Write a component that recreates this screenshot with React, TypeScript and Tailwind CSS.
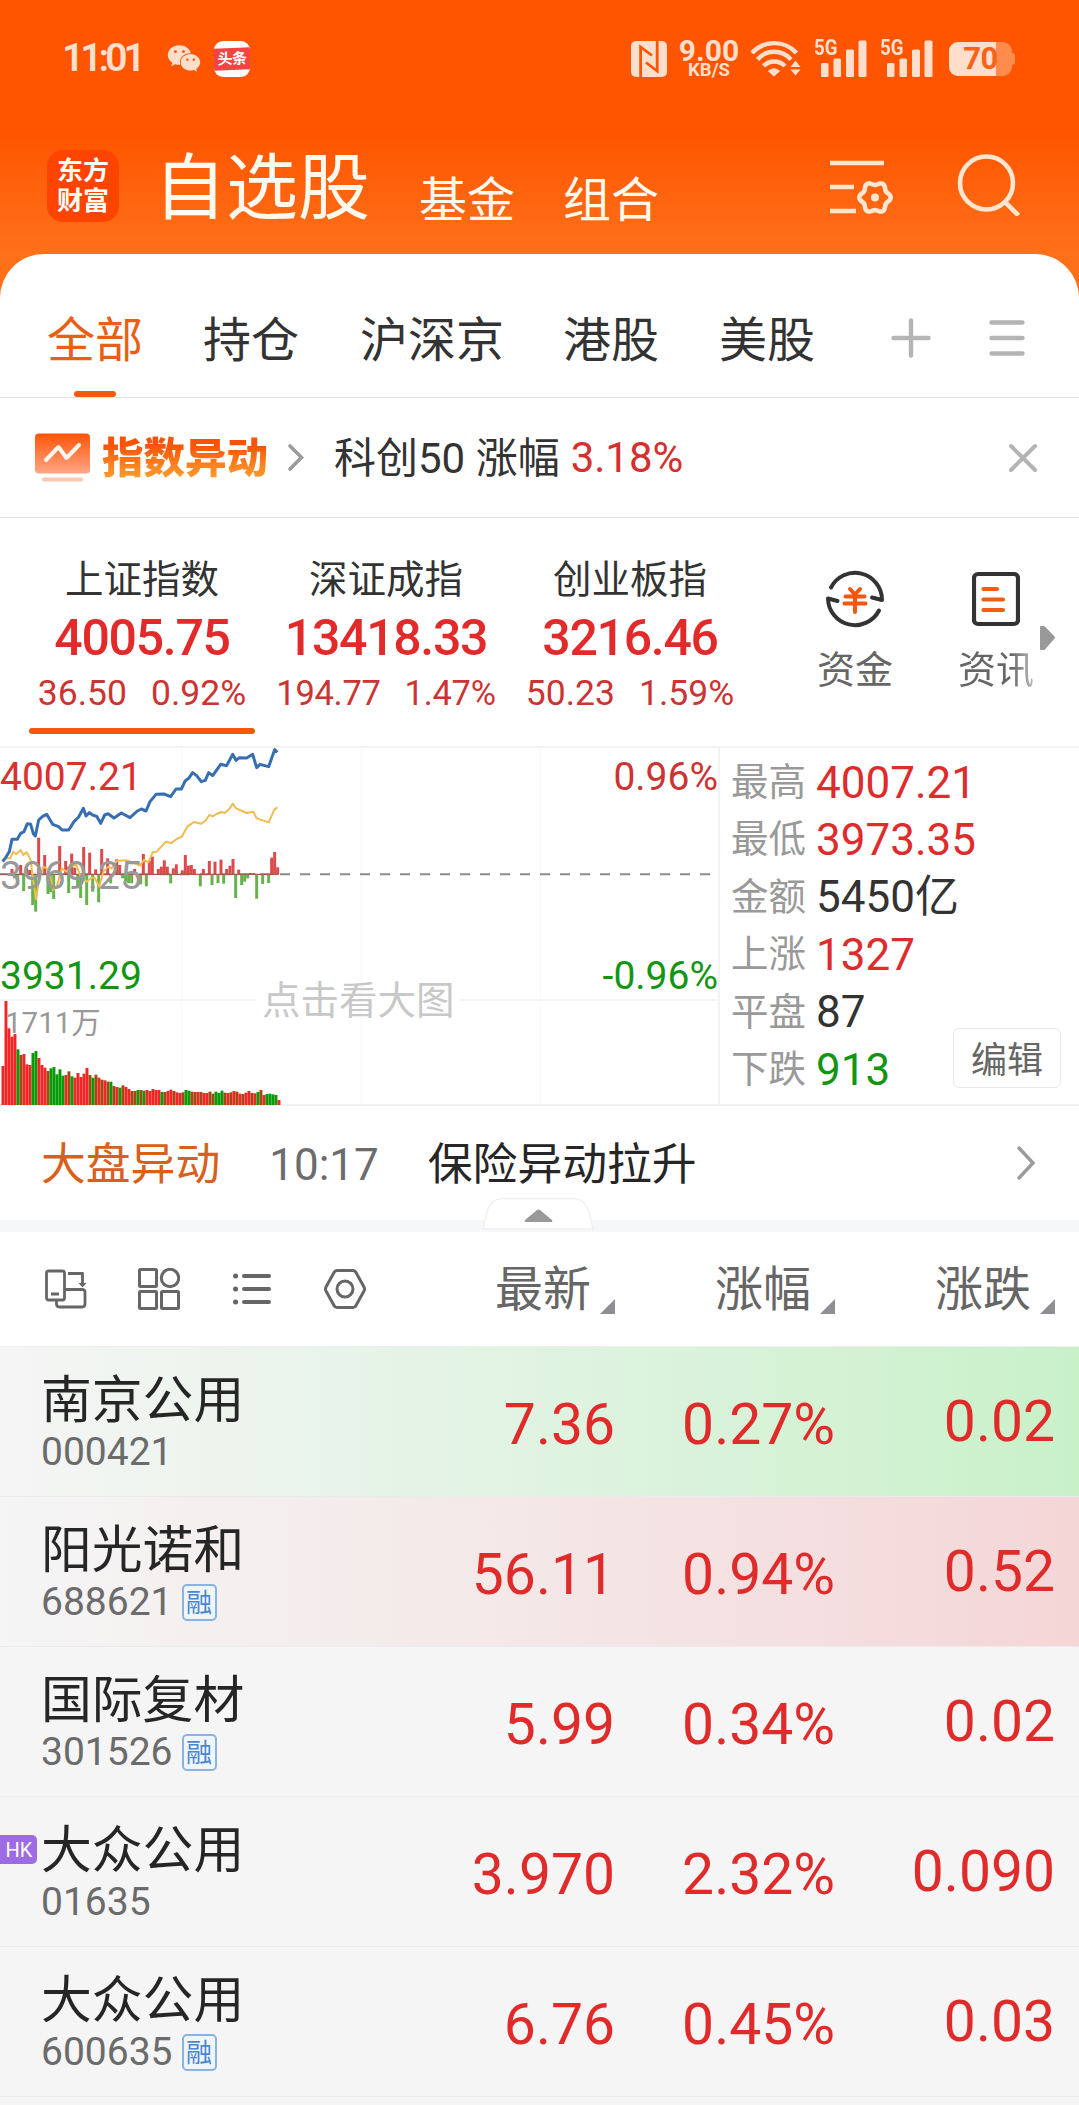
import React from 'react';
import { FaWeixin } from 'react-icons/fa';

// ─── Data ─────────────────────────────────────────────────────────────────────

interface MarketIndex {
    name: string;
    price: string;
    change: string;
    percent: string;
    active?: boolean;
}

const INDICES: MarketIndex[] = [
    { name: '上证指数', price: '4005.75', change: '36.50', percent: '0.92%', active: true },
    { name: '深证成指', price: '13418.33', change: '194.77', percent: '1.47%' },
    { name: '创业板指', price: '3216.46', change: '50.23', percent: '1.59%' },
];

const STATS = [
    { label: '最高', value: '4007.21', color: 'text-[#de2b2b]' },
    { label: '最低', value: '3973.35', color: 'text-[#de2b2b]' },
    { label: '金额', value: '5450亿', color: 'text-[#333333]' },
    { label: '上涨', value: '1327', color: 'text-[#de2b2b]' },
    { label: '平盘', value: '87', color: 'text-[#333333]' },
    { label: '下跌', value: '913', color: 'text-[#129612]' },
];

interface Stock {
    name: string;
    code: string;
    last: string;
    percent: string;
    change: string;
    margin?: boolean;
    hk?: boolean;
    bg: string;
}

const STOCKS: Stock[] = [
    { name: '南京公用', code: '000421', last: '7.36', percent: '0.27%', change: '0.02', bg: 'bg-linear-to-r from-[#f5f5f5] via-[#e0f3e2] to-[#c9f1c8]' },
    { name: '阳光诺和', code: '688621', last: '56.11', percent: '0.94%', change: '0.52', margin: true, bg: 'bg-linear-to-r from-[#f5f5f5] via-[#f4e7e7] to-[#f5d6d7]' },
    { name: '国际复材', code: '301526', last: '5.99', percent: '0.34%', change: '0.02', margin: true, bg: 'bg-[#f5f5f5]' },
    { name: '大众公用', code: '01635', last: '3.970', percent: '2.32%', change: '0.090', hk: true, bg: 'bg-[#f5f5f5]' },
    { name: '大众公用', code: '600635', last: '6.76', percent: '0.45%', change: '0.03', margin: true, bg: 'bg-[#f5f5f5]' },
];

// Chart data is in chart units, three per pixel
const PRICE_LINE =
    '8,380 18,366 28,350 36,313 52,313 62,295 72,290 82,266 92,268 100,296 106,303 116,255 128,244 140,238 158,268 176,275 186,285 206,285 222,260 236,246 250,220 258,243 268,233 278,240 290,244 302,265 314,240 324,236 342,249 364,234 390,248 412,228 424,222 438,228 450,200 468,178 492,177 512,185 528,162 544,162 556,137 566,130 578,113 590,122 604,140 616,136 626,113 638,122 662,88 680,92 698,58 708,76 718,68 740,69 758,58 770,98 780,88 806,95 824,44 832,52';

const AVERAGE_LINE =
    '18,370 30,370 40,350 48,358 62,345 70,360 80,352 92,375 100,440 108,492 118,430 130,395 140,400 150,420 160,465 170,455 185,400 200,410 215,395 228,388 240,420 260,440 275,428 285,430 297,455 310,410 325,395 335,400 350,378 380,376 405,385 420,392 432,375 445,382 458,352 470,350 498,320 514,324 530,312 545,305 562,275 582,261 604,266 618,255 628,240 638,244 650,237 664,231 674,234 688,222 698,206 708,220 740,234 760,230 770,250 806,262 822,226 832,217';

const UP_BARS = [
    [36, 402], [62, 390], [80, 400], [89, 405], [116, 308], [134, 360], [179, 333], [197, 378], [206, 395], [215, 356], [224, 398],
    [251, 336], [269, 353], [287, 403], [305, 342], [323, 370], [350, 373], [359, 390], [404, 402], [430, 357], [448, 378], [457, 365],
    [475, 402], [484, 395], [493, 376], [502, 395], [520, 400], [529, 388], [547, 406], [556, 360], [565, 392], [574, 390], [583, 402],
    [610, 402], [628, 378], [645, 380], [663, 374], [680, 402], [690, 392], [699, 372], [716, 404], [752, 414], [761, 414], [815, 368],
    [824, 351], [833, 397],
];

const DOWN_BARS = [
    [44, 430], [53, 450], [71, 468], [98, 510], [107, 530], [144, 477], [152, 472], [161, 492], [206, 474], [233, 460], [242, 489],
    [260, 510], [278, 470], [296, 502], [332, 445], [368, 430], [377, 440], [386, 444], [395, 445], [422, 448], [439, 454], [512, 445],
    [601, 454], [636, 450], [654, 444], [671, 446], [707, 489], [725, 450], [734, 440], [743, 430], [770, 491], [788, 447], [806, 444],
];

const VOLUME_TOPS = [
    993, 798, 880, 905, 897, 943, 960, 957, 988, 990, 954, 948, 969, 990, 998, 1008, 1000, 996, 1018, 1003, 1022, 1020, 1009, 1024,
    1028, 1014, 1026, 1016, 999, 1020, 1028, 1019, 1028, 1034, 1036, 1040, 1040, 1053, 1056, 1058, 1051, 1056, 1062, 1068, 1068, 1065,
    1065, 1067, 1065, 1068, 1062, 1065, 1065, 1071, 1071, 1068, 1064, 1068, 1072, 1074, 1072, 1065, 1067, 1070, 1071, 1071, 1071, 1074,
    1074, 1070, 1076, 1070, 1074, 1067, 1073, 1074, 1072, 1068, 1070, 1076, 1077, 1073, 1068, 1074, 1075, 1071, 1065, 1080, 1077, 1076,
    1078, 1080, 1095,
];

// r = up, g = down, m = mixed
const VOLUME_COLORS = 'rrrrrgmrrrggrrrmgggggrmgrrrrrmgmrmrmgmrgmrrmmgmgrrrrrgmrrmrrmggmmrmrrmmgggmrmrmrmrrmrgmrggggrrg';

const barColor = (c: string) => (c === 'g' ? '#069a06' : c === 'm' ? '#a04a12' : '#f02626');

const GEAR_POINTS = Array.from({ length: 72 }, (_, i) => {
    const a = (i * Math.PI) / 36;
    const r = 14.1 + 1.6 * Math.cos(6 * a);
    return `${(45 + r * Math.cos(a)).toFixed(2)},${(37.5 + r * Math.sin(a)).toFixed(2)}`;
}).join(' ');

// ─── Status bar ───────────────────────────────────────────────────────────────

const Signal: React.FC = () => (
    <div className="relative h-[37px] w-[52px]">
        <span className="absolute -left-px top-0 origin-left scale-x-[0.85] text-[22px] font-bold leading-[16px]">5G</span>
        <svg viewBox="0 0 52 37" className="h-full w-full" fill="currentColor">
            <rect x="6" y="23" width="7.5" height="14" rx="1.5" />
            <rect x="18.5" y="18.5" width="7.5" height="18.5" rx="1.5" />
            <rect x="31" y="9.5" width="8" height="27.5" rx="1.5" />
            <rect x="43.5" y="0.5" width="8" height="36.5" rx="1.5" />
        </svg>
    </div>
);

const StatusBar: React.FC = () => (
    <div className="flex h-[117px] items-center pl-[62px] pr-[64px] text-[#ffdfcc]">
        <span className="w-[105px] text-[39px] font-semibold leading-none tracking-[-4px]">11:01</span>
        <FaWeixin className="h-[31px] w-[34px]" />
        <div className="ml-[13px] flex h-[36px] w-[36px] flex-col justify-center overflow-hidden rounded-[9px] bg-white">
            <span className="-skew-y-2 bg-[#f54343] text-center text-[15px] font-bold leading-[22px] tracking-[-0.5px] text-white">头条</span>
        </div>

        <div className="ml-auto flex items-center">
            <svg viewBox="0 0 36 36" className="h-[36px] w-[36px]" fill="none">
                <rect width="36" height="36" rx="5" fill="currentColor" />
                <path d="M9.6 36V6L21 14.5M26.2 0V30L15 21.5" stroke="#ff5500" strokeWidth="2.8" />
            </svg>
            <div className="ml-[11px] flex w-[62px] flex-col items-center">
                <span className="text-[30px] font-bold leading-[21px]">9.00</span>
                <span className="mt-px text-[18.500px] font-bold leading-[16px]">KB/S</span>
            </div>
            <svg viewBox="0 0 51 37" className="ml-[10px] h-[37px] w-[51px]" fill="none" stroke="currentColor" strokeWidth="4.4">
                <path d="M2 13A30 30 0 0 1 46.500 13" />
                <path d="M7.500 19.500A22 22 0 0 1 41 19.500" />
                <path d="M13.500 26A15 15 0 0 1 35 26" />
                <path d="M24 36.500L17.800 31Q24 25.500 30.200 31Z" fill="currentColor" stroke="none" />
                <path d="M45.500 20.500L50.500 27H40.500ZM45.500 35.500L50.500 29.500H40.500Z" fill="currentColor" stroke="none" />
            </svg>
            <div className="ml-[14px]"><Signal /></div>
            <div className="ml-[14px]"><Signal /></div>
            <div className="ml-[16px] flex items-center">
                <div className="relative flex h-[34px] w-[63px] items-center justify-center overflow-hidden rounded-[9px] bg-[#ff8c4d]">
                    <div className="absolute left-0 top-0 h-full w-[47px] bg-[#ffdfcc]" />
                    <span className="relative text-[31px] font-bold leading-none tracking-[-0.5px] text-[#f9621a]">70</span>
                </div>
                <div className="h-[12px] w-[3px] rounded-r-sm bg-[#ff8c4d]" />
            </div>
        </div>
    </div>
);

// ─── Header ───────────────────────────────────────────────────────────────────

const Header: React.FC = () => (
    <div className="flex h-[137px] items-start pl-[47px] pr-[58px] pt-[33px] text-[#fffaf0]">
        <div className="flex h-[72px] w-[72px] flex-col items-center justify-center rounded-[16px] bg-[#ff4400] text-[26px] font-bold leading-[30px] text-white">
            <span>东方</span>
            <span>财富</span>
        </div>
        <span className="ml-[35px] text-[72px] leading-[77px]">自选股</span>
        <span className="ml-[49px] mt-[25px] text-[48px] leading-[52px]">基金</span>
        <span className="ml-[48px] mt-[25px] text-[48px] leading-[52px]">组合</span>
        <svg viewBox="0 0 64 56" className="ml-auto mt-[10px] h-[56px] w-[64px]" fill="none" stroke="#ffe6d0" strokeWidth="4.6">
            <path d="M0 3H54M0 27H24M0 51H26" />
            <polygon points={GEAR_POINTS} strokeLinejoin="round" />
            <circle cx="45" cy="37.500" r="4" fill="#ffe6d0" stroke="none" />
        </svg>
        <svg viewBox="0 0 64 64" className="ml-[63px] mt-[2px] h-[64px] w-[64px]" fill="none" stroke="#ffe6d0" strokeWidth="4.6">
            <circle cx="29.500" cy="31" r="26.500" />
            <path d="M48 50L61.500 63.500" />
        </svg>
    </div>
);

const Tabs: React.FC = () => (
    <div className="relative flex h-[144px] items-center border-b border-[#e2e2e2] pl-[47px] pr-[54px] pt-[31px] text-[48px] leading-none text-[#333333]">
        <span className="mr-[60px] text-[#ea5e16]">全部</span>
        <span className="mr-[61px]">持仓</span>
        <span className="mr-[59px]">沪深京</span>
        <span className="mr-[60px]">港股</span>
        <span>美股</span>
        <svg viewBox="0 0 40 40" className="mb-[6px] ml-auto h-[40px] w-[40px]" stroke="#b4b4b4" strokeWidth="4.400" strokeLinecap="round">
            <path d="M2.500 20H37.500M20 2.500V37.500" />
        </svg>
        <svg viewBox="0 0 36 40" className="mb-[6px] ml-[58px] h-[40px] w-[36px]" stroke="#b4b4b4" strokeWidth="4.400" strokeLinecap="round">
            <path d="M2.500 4.500H33.500M2.500 20H33.500M2.500 35.500H33.500" />
        </svg>
        <div className="absolute bottom-0 left-[74px] h-[6px] w-[42px] rounded-full bg-[#f3590f]" />
    </div>
);

const IndexAlert: React.FC = () => (
    <div className="flex h-[120px] items-center border-b border-[#e2e2e2] pl-[35px] pr-[41px] text-[42px] leading-none text-[#333333]">
        <svg viewBox="0 0 55 50" className="h-[50px] w-[55px]" fill="none">
            <defs>
                <linearGradient id="alert" x1="0" y1="0" x2="0" y2="1">
                    <stop stopColor="#ff5407" />
                    <stop offset="1" stopColor="#ffa684" />
                </linearGradient>
            </defs>
            <rect y="0.500" width="55" height="40" rx="4" fill="url(#alert)" />
            <path d="M11 27L23.500 14L31.500 25L44 12" stroke="#fff7f0" strokeWidth="4" strokeLinecap="round" strokeLinejoin="round" />
            <rect x="7" y="44.500" width="41" height="4" rx="2" fill="#fbc7b0" />
        </svg>
        <span className="ml-[12px] mt-[2px] bg-linear-to-b from-[#fa5306] from-25% to-[#fba02e] to-90% bg-clip-text text-[41.500px] font-black leading-[52px] text-transparent">指数异动</span>
        <svg viewBox="0 0 18 30" className="ml-[19px] h-[30px] w-[18px]" fill="none" stroke="#9b9b9b" strokeWidth="3.600" strokeLinecap="round">
            <path d="M3 3L14.500 14.500L3 26" />
        </svg>
        <span className="ml-[29px] mt-[2px]">科创50 涨幅</span>
        <span className="ml-[11px] mt-px text-[#d4302f]">3.18%</span>
        <svg viewBox="0 0 30 30" className="ml-auto h-[30px] w-[30px]" stroke="#b4b4b4" strokeWidth="4" strokeLinecap="round">
            <path d="M3 3L27 27M27 3L3 27" />
        </svg>
    </div>
);

// ─── Indices ──────────────────────────────────────────────────────────────────

const Indices: React.FC = () => (
    <div className="flex h-[230px] border-b-2 border-[#f3f3f3] pl-[20px]">
        {INDICES.map((item) => (
            <div key={item.name} className="relative flex w-[244px] shrink-0 flex-col items-center pt-[41px] leading-none">
                <span className="text-[38.500px] leading-[42px] text-[#333333]">{item.name}</span>
                <span className="mt-[12px] text-[50px] font-medium leading-[50px] tracking-[-1.300px] text-[#e32a2a]">{item.price}</span>
                <div className={`mt-[11px] flex gap-[24px] whitespace-nowrap leading-[38px] text-[#cc3333] ${item.change.length > 5 ? 'text-[34.500px] tracking-[-0.3px]' : 'text-[35.500px]'}`}>
                    <span>{item.change}</span>
                    <span>{item.percent}</span>
                </div>
                {item.active && <div className="absolute bottom-[12px] left-[9px] h-[6px] w-[226px] rounded-full bg-[#f8560c]" />}
            </div>
        ))}
        <div className="ml-[45px] flex w-[116px] shrink-0 flex-col items-center pt-[51px]">
            <svg viewBox="0 0 60 60" className="h-[60px] w-[60px]" fill="none" stroke="#333333" strokeWidth="4" strokeLinecap="round" strokeLinejoin="round">
                <path d="M6 18.500A27 27 0 0 1 57 31L47 28.500" />
                <path d="M54 41.500A27 27 0 0 1 3 29.500L12.500 32" />
                <path d="M25 20L30 25.500L35 20M20.500 27.500H39.500M19.500 34.500H40.500M30 26V43" stroke="#f8560c" />
            </svg>
            <span className="mt-[20px] text-[38px] leading-[42px] text-[#666666]">资金</span>
        </div>
        <div className="ml-[25px] flex w-[116px] shrink-0 flex-col items-center pt-[51px]">
            <svg viewBox="0 0 48 60" className="h-[60px] w-[48px]" fill="none" stroke="#333333" strokeWidth="4.200" strokeLinecap="round">
                <rect x="2" y="5" width="44" height="50" rx="4" />
                <path d="M11.500 20H25M11.500 30.500H31M11.500 41H31" stroke="#ee5f14" />
            </svg>
            <span className="mt-[20px] bg-linear-to-r from-[#666666] from-70% to-[#c0c0c0] bg-clip-text text-[38px] leading-[42px] text-transparent">资讯</span>
        </div>
        <svg viewBox="0 0 16 26" className="-ml-[14px] mt-[107px] h-[26px] w-[16px]" fill="#999999" stroke="#999999" strokeWidth="2" strokeLinejoin="round">
            <path d="M1 2L4 2L14 12.500L4 24H1Z" />
        </svg>
    </div>
);

// ─── Intraday chart ───────────────────────────────────────────────────────────

const Chart: React.FC = () => (
    <div className="relative h-[357px] w-[718px] overflow-hidden leading-none">
        <svg viewBox="0 39 2154 1071" className="h-full w-full" fill="none">
            <g stroke="#f1f1f1" strokeWidth="3">
                <path d="M545 42V1110M1084 42V1110M1621 42V1110" strokeDasharray="4 4" />
                <path d="M0 795H770M1380 795H2154" strokeWidth="5" />
            </g>
            <path d="M0 418H2145" stroke="#8c8c8c" strokeWidth="6" strokeDasharray="30 30" />
            {UP_BARS.map(([x, top]) => (
                <rect key={x} x={x - 4.5} y={top} width="9" height={418 - top} fill="#dc4a4c" />
            ))}
            {DOWN_BARS.map(([x, bottom]) => (
                <rect key={x} x={x - 4.5} y="418" width="9" height={bottom - 418} fill="#66b34e" />
            ))}
            <path d="M0 418H836" stroke="#a35b50" strokeWidth="4" />
            <polyline points={AVERAGE_LINE} stroke="#efbc4e" strokeWidth="6" strokeLinejoin="round" />
            <polyline points={PRICE_LINE} stroke="#356fb1" strokeWidth="9" strokeLinejoin="round" />
            {VOLUME_TOPS.map((top, i) => (
                <rect key={i} x={4.5 + i * 9} y={top} width="8.8" height={1110 - top} fill={barColor(VOLUME_COLORS[i])} />
            ))}
        </svg>
        <span className="absolute left-0 top-[9px] text-[39px] leading-[40px] text-[#dc2f2f]">4007.21</span>
        <span className="absolute left-0 top-[108px] text-[39px] leading-[40px] text-[#999999]">3969.25</span>
        <span className="absolute left-0 top-[208px] text-[39px] leading-[40px] text-[#129612]">3931.29</span>
        <span className="absolute left-[5px] top-[259px] text-[29.500px] leading-[32px] text-[#999999]">1711万</span>
        <span className="absolute right-0 top-[9px] text-[39px] leading-[40px] text-[#cc3333]">0.96%</span>
        <span className="absolute right-0 top-[208px] text-[39px] leading-[40px] text-[#129612]">-0.96%</span>
        <span className="absolute left-[262px] top-[233px] text-[38.500px] leading-[40px] text-[#c8c8c8]">点击看大图</span>
    </div>
);

const ChartPanel: React.FC = () => (
    <div className="flex h-[358px] border-b-2 border-[#f0f0f0]">
        <Chart />
        <div className="relative flex-1 border-l-2 border-[#f3f3f3] pl-[11px] pt-[6px]">
            {STATS.map((s) => (
                <div key={s.label} className="flex h-[57.400px] items-center gap-[10px] leading-none">
                    <span className="text-[37.500px] text-[#999999]">{s.label}</span>
                    <span className={`text-[44px] ${s.color}`}>{s.value}</span>
                </div>
            ))}
            <button className="absolute right-[18px] top-[280px] flex h-[60px] w-[108px] items-center justify-center rounded-[6px] border border-[#e8e8e8] bg-white pt-[5px] text-[36px] leading-none text-[#666666]">
                编辑
            </button>
        </div>
    </div>
);

const MarketNews: React.FC = () => (
    <div className="relative h-[126px] border-b-[12px] border-[#f6f7f9]">
        <div className="flex h-[114px] items-center pl-[41px] pr-[43px] pt-[4px] text-[44.800px] leading-none">
            <span className="text-[#d9601a]">大盘异动</span>
            <span className="ml-[49px] text-[44px] text-[#6c6c6c]">10:17</span>
            <span className="ml-[49px] text-[#262626]">保险异动拉升</span>
            <svg viewBox="0 0 20 36" className="mb-[4px] ml-auto h-[36px] w-[20px]" fill="none" stroke="#9b9b9b" strokeWidth="3.400" strokeLinecap="round">
                <path d="M3 3L17 18L3 33" />
            </svg>
        </div>
        <svg viewBox="0 0 112 34" className="absolute left-[482px] top-[91px] h-[34px] w-[112px]" fill="none">
            <path d="M1 32L5 15Q9 1.500 21 1.500H91Q103 1.500 107 15L111 32Z" fill="#ffffff" stroke="#f1f1f3" strokeWidth="1.500" />
            <path d="M43 23L55 13Q56.500 12 58 13L70 23Q71 25 69 25H44Q42 25 43 23Z" fill="#999999" />
        </svg>
    </div>
);

// ─── Watch list ───────────────────────────────────────────────────────────────

const SortHeader: React.FC<{ label: string }> = ({ label }) => (
    <div className="flex w-[220px] items-center justify-end">
        <span className="pt-px">{label}</span>
        <svg viewBox="0 0 15 15" className="ml-[9px] mt-[35px] h-[15px] w-[15px]" fill="#8e8e93">
            <path d="M15 0V15H0Z" />
        </svg>
    </div>
);

const ListToolbar: React.FC = () => (
    <div className="flex h-[115px] items-center border-b border-[#eeeeee] pl-[45px] pr-[24px] text-[48px] leading-none text-[#666666]">
        <svg viewBox="0 0 42 42" className="h-[42px] w-[42px]" fill="none" stroke="#666666" strokeWidth="2.800" strokeLinejoin="round">
            <rect x="1.500" y="3" width="18" height="29" rx="2" />
            <path d="M6 26H14M23 5.500H37.500V16M11.500 32V36Q11.500 39 14.500 39H37Q40 39 40 36V24Q40 21.500 37 21.500H20" />
            <path d="M33.500 15H41.500L37.500 19.500Z" fill="#666666" stroke="none" />
        </svg>
        <svg viewBox="0 0 42 42" className="ml-[51px] h-[42px] w-[42px]" fill="none" stroke="#666666" strokeWidth="3">
            <rect x="1.500" y="1.500" width="17" height="17" rx="1" />
            <circle cx="32" cy="10" r="8.700" />
            <rect x="1.500" y="23.500" width="17" height="17" rx="1" />
            <rect x="23.500" y="23.500" width="17" height="17" rx="1" />
        </svg>
        <svg viewBox="0 0 40 42" className="ml-[52px] h-[42px] w-[40px]" stroke="#666666" strokeWidth="4" strokeLinecap="round">
            <path d="M12 8H37M12 21H37M12 34H37" />
            <path d="M3.500 8H3.600M3.500 21H3.600M3.500 34H3.600" strokeWidth="5" />
        </svg>
        <svg viewBox="0 0 42 42" className="ml-[52px] h-[42px] w-[42px]" fill="none" stroke="#666666" strokeWidth="3">
            <path d="M13 2.500H29Q31 2.500 32 4.500L40 19Q41 21 40 23L32 37.500Q31 39.500 29 39.500H13Q11 39.500 10 37.500L2 23Q1 21 2 19L10 4.500Q11 2.500 13 2.500Z" />
            <circle cx="21" cy="21" r="8" />
        </svg>
        <div className="ml-auto flex">
            <SortHeader label="最新" />
            <SortHeader label="涨幅" />
            <SortHeader label="涨跌" />
        </div>
    </div>
);

const StockRow: React.FC<{ stock: Stock }> = ({ stock }) => (
    <div className={`relative flex h-[150px] border-b border-[#ebebeb] pl-[41px] pr-[24px] leading-none ${stock.bg}`}>
        {stock.hk && (
            <span className="absolute left-0 top-[38px] flex h-[29px] w-[37px] items-center justify-center rounded-r-[5px] bg-[#9d6be3] pl-[1px] text-[20px] text-white">
                HK
            </span>
        )}
        <div className="flex w-[354px] flex-col pt-[27px]">
            <span className="text-[50.800px] leading-[54px] text-[#262626]">{stock.name}</span>
            <div className="mt-[4px] flex h-[40px] items-center">
                <span className="text-[39px] text-[#6b6b6b]">{stock.code}</span>
                {stock.margin && (
                    <span className="ml-[9px] flex h-[37px] w-[35px] items-center justify-center rounded-[5px] border-2 border-[#8ab3e0] bg-[#f0f5fb] pt-[2px] text-[26px] text-[#4a87cc]">
                        融
                    </span>
                )}
            </div>
        </div>
        <div className="flex flex-1 text-right text-[57px] leading-[60px] text-[#e02b2b]">
            <span className="w-[220px] pt-[48px]">{stock.last}</span>
            <span className="w-[220px] pt-[48px]">{stock.percent}</span>
            <span className="w-[220px] pt-[45px]">{stock.change}</span>
        </div>
    </div>
);

// ─── Page ─────────────────────────────────────────────────────────────────────

const App: React.FC = () => (
    <div className="h-[2105px] w-[1079px] overflow-hidden bg-[#f5f5f5] font-[Roboto,'Noto_Sans_CJK_SC',sans-serif]">
        <div className="bg-linear-to-b from-[#ff5500] from-[135px] to-[#ff7018] to-[254px]">
            <StatusBar />
            <Header />
            <div className="rounded-t-[44px] bg-white">
                <Tabs />
                <IndexAlert />
                <Indices />
                <ChartPanel />
                <MarketNews />
                <ListToolbar />
            </div>
        </div>
        {STOCKS.map((stock) => (
            <StockRow key={stock.code} stock={stock} />
        ))}
    </div>
);

export default App;
